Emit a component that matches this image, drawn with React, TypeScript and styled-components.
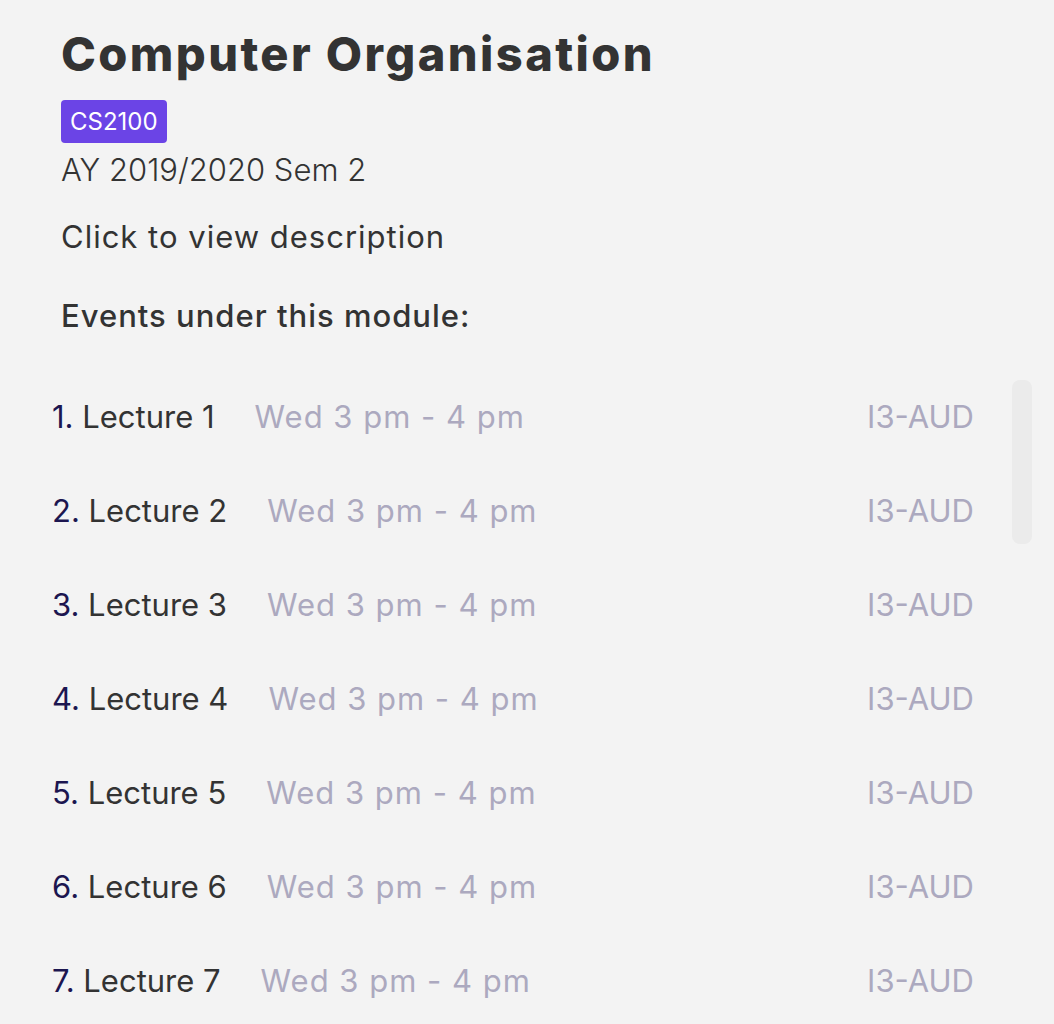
import styled, { createGlobalStyle } from 'styled-components';

const GlobalStyle = createGlobalStyle`
  body {
    margin: 0;
    background: #f3f3f3;
    font-family: Inter, "Noto Sans", sans-serif;
    color: #333333;
  }
`;

const Page = styled.div`
  display: flex;
  flex-direction: column;
  padding-right: 22px;
`;

const Header = styled.div`
  display: flex;
  flex-direction: column;
  align-items: flex-start;
  padding: 26px 0 0 61px;
`;

const Title = styled.h1`
  margin: 0;
  font-size: 47px;
  font-weight: 800;
  line-height: 56px;
  letter-spacing: 2.4px;
  color: #333333;
`;

const Badge = styled.span`
  margin-top: 18px;
  display: inline-flex;
  align-items: center;
  height: 43px;
  padding: 0 9px;
  box-sizing: border-box;
  border-radius: 4px;
  background: #6b44e6;
  color: #ffffff;
  font-size: 24px;
`;

const Term = styled.div`
  margin-top: 9px;
  font-size: 31px;
  font-weight: 300;
  line-height: 36px;
`;

const Description = styled.div`
  margin-top: 31px;
  font-size: 31px;
  line-height: 36px;
  letter-spacing: 1px;
  cursor: pointer;
`;

const SectionLabel = styled.div`
  margin-top: 43px;
  font-size: 31px;
  font-weight: 500;
  line-height: 36px;
  letter-spacing: 1px;
`;

const ListArea = styled.div`
  margin-top: 46px;
  display: flex;
  height: 644px;
  overflow: hidden;
`;

const EventList = styled.ol`
  flex: 1;
  list-style: none;
  margin: 0;
  padding: 0;
  display: flex;
  flex-direction: column;
  gap: 20px;
`;

const ScrollTrack = styled.div`
  width: 20px;
  flex: none;
`;

const ScrollThumb = styled.div`
  height: 164px;
  border-radius: 8px;
  background: #ebebeb;
`;

const EventRow = styled.li`
  flex: none;
  display: flex;
  align-items: center;
  min-height: 74px;
  padding: 0 38px 0 52px;
  font-size: 31px;
  line-height: 40px;
`;

const EventName = styled.span`
  color: #333333;
`;

const Index = styled.span`
  color: #1c1650;
`;

const Muted = styled.span`
  color: #aca9bf;
`;

const Time = styled(Muted)`
  margin-left: 40px;
  letter-spacing: 1px;
`;

const Venue = styled(Muted)`
  margin-left: auto;
`;

const events = Array.from({ length: 7 }, (_, i) => ({
  id: i + 1,
  name: `Lecture ${i + 1}`,
  time: 'Wed 3 pm - 4 pm',
  venue: 'I3-AUD',
}));

export default function App() {
  return (
    <>
      <GlobalStyle />
      <Page>
        <Header>
          <Title>Computer Organisation</Title>
          <Badge>CS2100</Badge>
          <Term>AY 2019/2020 Sem 2</Term>
          <Description>Click to view description</Description>
          <SectionLabel>Events under this module:</SectionLabel>
        </Header>
        <ListArea>
          <EventList>
            {events.map((ev) => (
              <EventRow key={ev.id}>
                <EventName>
                  <Index>{ev.id}.</Index> {ev.name}
                </EventName>
                <Time>{ev.time}</Time>
                <Venue>{ev.venue}</Venue>
              </EventRow>
            ))}
          </EventList>
          <ScrollTrack>
            <ScrollThumb />
          </ScrollTrack>
        </ListArea>
      </Page>
    </>
  );
}
